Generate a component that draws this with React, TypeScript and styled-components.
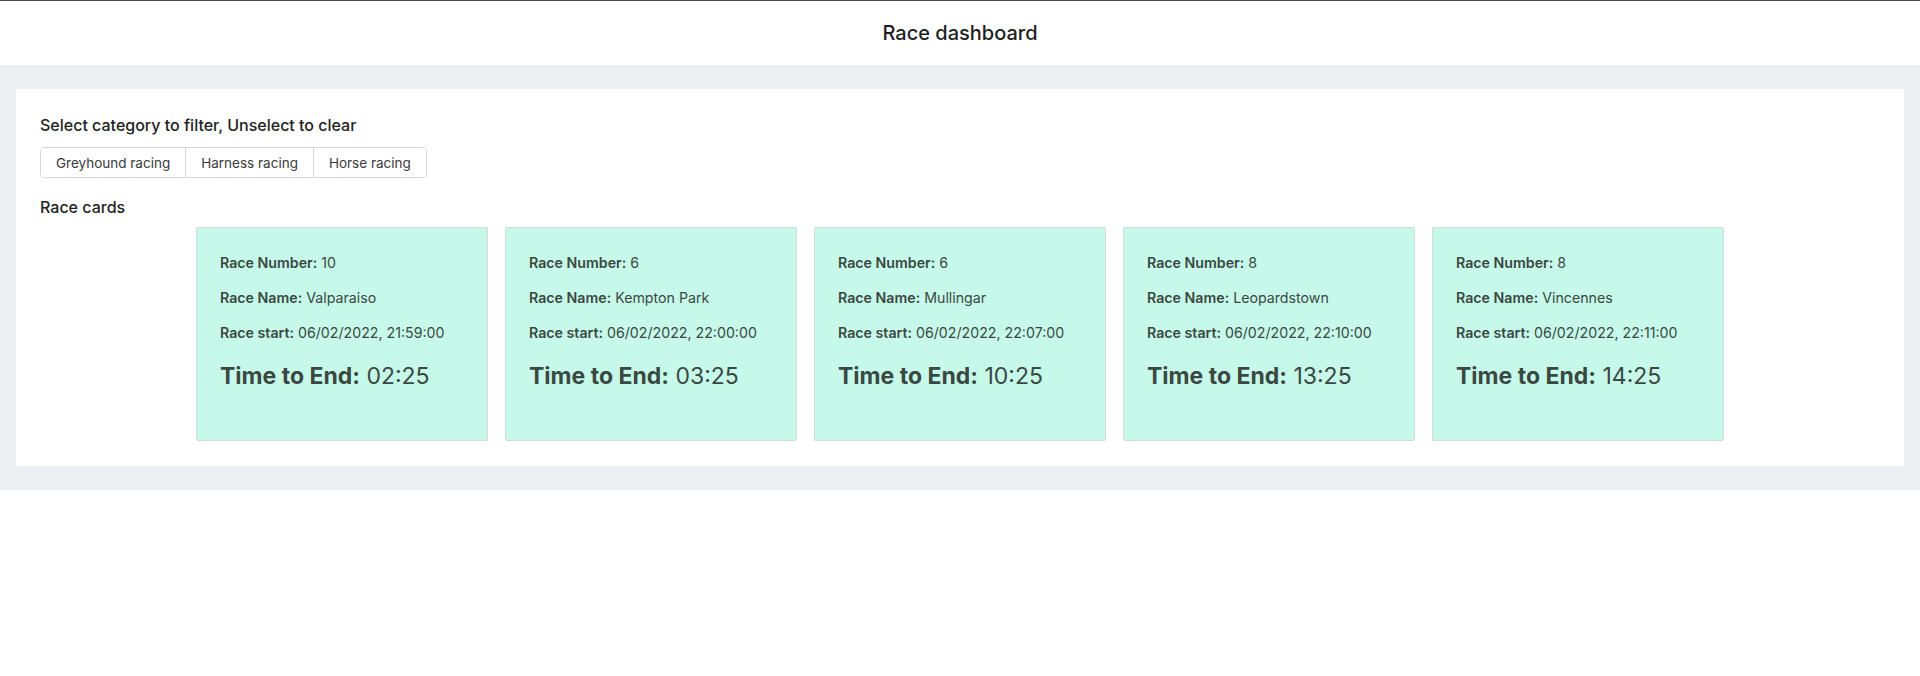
import React from "react";
import styled, { createGlobalStyle } from "styled-components";

const GlobalStyle = createGlobalStyle`
    html, body {
        margin: 0;
        padding: 0;
        background: #ffffff;
        font-family: Inter, "Noto Sans", sans-serif;
        color: #222222;
    }
`;

const Header = styled.header`
    height: 64px;
    border-top: 1px solid #4a4a4a;
    display: flex;
    align-items: center;
    justify-content: center;
    background: #ffffff;
`;

const Title = styled.h1`
    margin: 0;
    font-size: 20px;
    font-weight: 500;
    color: #1f1f1f;
`;

const Main = styled.main`
    background: #ebeff2;
    padding: 24px 16px;
`;

const Panel = styled.section`
    background: #ffffff;
    padding: 24px 24px 25px;
`;

const SectionLabel = styled.div`
    font-size: 16px;
    font-weight: 500;
    line-height: 24px;
    color: #222222;
`;

const FilterGroup = styled.div`
    display: inline-flex;
    margin: 10px 0 17px;
    border: 1px solid #d6d6d6;
    border-radius: 4px;
    overflow: hidden;
`;

const FilterButton = styled.button<{ $active?: boolean }>`
    font-family: Inter, "Noto Sans", sans-serif;
    font-size: 13.5px;
    color: #3a3a3a;
    background: ${(p) => (p.$active ? "#e6e6e6" : "#ffffff")};
    border: none;
    border-left: 1px solid #d6d6d6;
    padding: 0 15px;
    height: 29px;
    cursor: pointer;
    &:first-child {
        border-left: none;
    }
`;

const CardRow = styled.div`
    display: flex;
    justify-content: center;
    gap: 17px;
    margin-top: 8px;
`;

const Card = styled.div`
    width: 292px;
    height: 214px;
    box-sizing: border-box;
    background: #c6f9e9;
    border: 1px solid #d3dcd8;
    border-radius: 2px;
    padding: 24px 23px;
    color: #3a4842;
`;

const Details = styled.div`
    display: flex;
    flex-direction: column;
    gap: 14px;
`;

const Line = styled.p`
    margin: 0;
    font-size: 14.2px;
    line-height: 21px;
    strong {
        font-weight: 600;
    }
`;

const Countdown = styled.p`
    margin: 17px 0 0;
    font-size: 23px;
    line-height: 32px;
    strong {
        font-weight: 700;
    }
`;

interface Race {
    number: number;
    name: string;
    start: string;
    left: string;
}

const races: Race[] = [
    { number: 10, name: "Valparaiso", start: "06/02/2022, 21:59:00", left: "02:25" },
    { number: 6, name: "Kempton Park", start: "06/02/2022, 22:00:00", left: "03:25" },
    { number: 6, name: "Mullingar", start: "06/02/2022, 22:07:00", left: "10:25" },
    { number: 8, name: "Leopardstown", start: "06/02/2022, 22:10:00", left: "13:25" },
    { number: 8, name: "Vincennes", start: "06/02/2022, 22:11:00", left: "14:25" },
];

const categories = ["Greyhound racing", "Harness racing", "Horse racing"];

const RaceCard = ({ race }: { race: Race }) => (
    <Card>
        <Details>
            <Line><strong>Race Number:</strong> {race.number}</Line>
            <Line><strong>Race Name:</strong> {race.name}</Line>
            <Line><strong>Race start:</strong> {race.start}</Line>
        </Details>
        <Countdown><strong>Time to End:</strong> {race.left}</Countdown>
    </Card>
);

const App = () => {
    const [active, setActive] = React.useState<string | null>(null);
    return (
        <>
            <GlobalStyle />
            <Header>
                <Title>Race dashboard</Title>
            </Header>
            <Main>
                <Panel>
                    <SectionLabel>Select category to filter, Unselect to clear</SectionLabel>
                    <FilterGroup>
                        {categories.map((c) => (
                            <FilterButton
                                key={c}
                                $active={active === c}
                                onClick={() => setActive(active === c ? null : c)}
                            >
                                {c}
                            </FilterButton>
                        ))}
                    </FilterGroup>
                    <SectionLabel>Race cards</SectionLabel>
                    <CardRow>
                        {races.map((r) => (
                            <RaceCard key={r.name} race={r} />
                        ))}
                    </CardRow>
                </Panel>
            </Main>
        </>
    );
};

export default App;
